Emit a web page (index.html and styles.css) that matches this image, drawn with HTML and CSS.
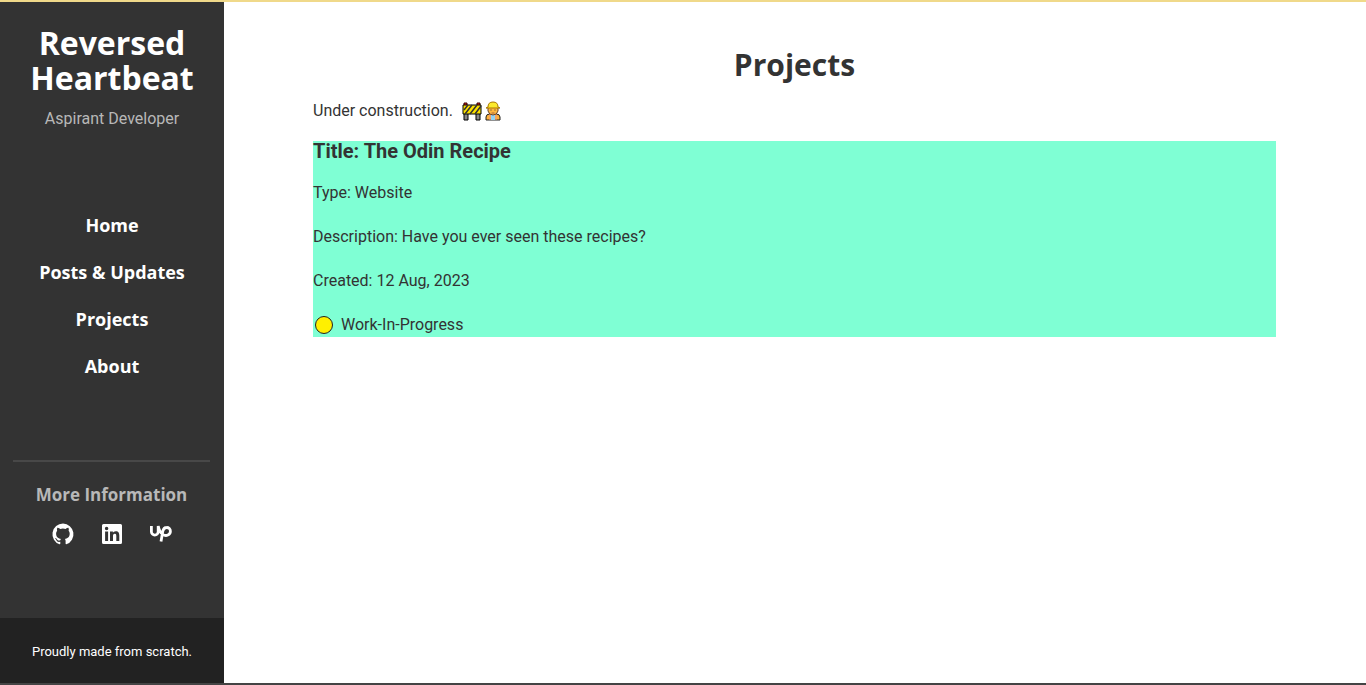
FILE: index.html
```html
<!DOCTYPE html>
<html lang="en">
<head>
<meta charset="utf-8">
<meta name="viewport" content="width=device-width, initial-scale=1">
<title>Projects | Reversed Heartbeat</title>
<link rel="stylesheet" href="styles.css">
</head>
<body>
<div class="layout">
  <aside class="sidebar">
    <header class="brand">
      <h1 class="brand-name">Reversed Heartbeat</h1>
      <p class="brand-role">Aspirant Developer</p>
    </header>
    <nav class="menu">
      <a href="#home">Home</a>
      <a href="#posts">Posts &amp; Updates</a>
      <a href="#projects">Projects</a>
      <a href="#about">About</a>
    </nav>
    <section class="more">
      <h2 class="more-title">More Information</h2>
      <div class="social">
        <a href="#github" aria-label="GitHub"><svg viewBox="0 0 24 24" width="24" height="24" fill="currentColor"><path d="M12 1.5a10.7 10.7 0 0 0-3.4 20.8c.6.1.7-.2.7-.5v-2c-3 .6-3.700-1.300-3.700-1.300-.5-1.200-1.200-1.600-1.200-1.600-1-.7.1-.6.1-.6 1.100.1 1.600 1.100 1.600 1.100 1 1.600 2.500 1.200 3.200.9.100-.7.400-1.200.7-1.400-2.400-.3-4.900-1.200-4.900-5.300 0-1.200.4-2.100 1.100-2.900-.1-.3-.5-1.400.1-2.800 0 0 .9-.3 2.900 1.100a10 10 0 0 1 5.400 0c2-1.400 2.900-1.100 2.900-1.100.6 1.400.2 2.500.1 2.800.7.800 1.100 1.700 1.100 2.900 0 4.100-2.500 5-4.900 5.300.4.300.8 1 .8 2v2.900c0 .3.200.6.7.5A10.700 10.700 0 0 0 12 1.500Z"/></svg></a>
        <a href="#linkedin" aria-label="LinkedIn"><svg viewBox="0 0 24 24" width="24" height="24" fill="currentColor" fill-rule="evenodd"><path d="M3.500 2h17a1.500 1.500 0 0 1 1.500 1.500v17a1.500 1.500 0 0 1-1.500 1.500h-17A1.500 1.500 0 0 1 2 20.500v-17A1.500 1.500 0 0 1 3.500 2Zm1.600 7.500V19h3V9.500Zm1.500-4.700a1.700 1.700 0 1 0 0 3.500 1.700 1.700 0 0 0 0-3.500ZM10 9.500V19h3v-4.700c0-1.300.3-2.500 1.800-2.500s1.500 1.400 1.500 2.500V19h3v-5.200c0-2.600-.6-4.500-3.600-4.500-1.400 0-2.400.8-2.800 1.500V9.500Z"/></svg></a>
        <a href="#upwork" aria-label="Upwork"><svg viewBox="0 0 24 24" width="24" height="24" fill="none" stroke="currentColor" stroke-width="2.800"><path d="M2.400 4v5.700a3.400 3.400 0 0 0 6.800 0V4c.7 3.500 2 6.500 4.400 8.300 3.700 2.600 7.800.4 7.800-3.100a3.600 3.600 0 0 0-3.700-3.700c-2.500 0-3.500 1.600-4 4L12 19.500"/></svg></a>
      </div>
    </section>
    <footer class="credit">Proudly made from scratch.</footer>
  </aside>
  <main class="content">
    <h2 class="page-title">Projects</h2>
    <p class="notice"><span>Under construction.</span>
      <span class="emojis"><svg viewBox="0 0 20 20" width="20" height="20" role="img" aria-label="Construction barrier"><path d="M3 12h3v7H2v-7zm12 0h3v7h-4v-7z" fill="#888" stroke="#000"/><path d="M2 4V2h3v2m10 0V2h3v2" fill="#e22" stroke="#300"/><path d="M1 4h18v9H1z" fill="#fce100" stroke="#000"/><path d="m2 9 4-5m-3 9 7-9m-2 9 7-9m-2 9 6-8" stroke="#333" stroke-width="1.500"/></svg><svg viewBox="0 0 20 20" width="20" height="20" role="img" aria-label="Construction worker"><path d="M3 19v-3q0-3 4-3h6q4 0 4 3v3z" fill="#ffb13b" stroke="#222"/><path d="M8 13h4v6H8z" fill="#92d3f5"/><path d="M7 13v6m6-6v6" stroke="#e98"/><path d="M5 6v4q1 4 5 4t5-4V6z" fill="#ffb83f" stroke="#643"/><path d="M3 7h14l-2-1q0-5-5-5T5 6z" fill="#fcea2b" stroke="#a70"/><path d="M7.500 9h1m3 0h1" stroke="#432"/><path d="M8.500 12h3" stroke="#a64"/></svg></span>
    </p>
    <article class="project">
      <h3 class="project-title">Title: The Odin Recipe</h3>
      <p>Type: Website</p>
      <p>Description: Have you ever seen these recipes?</p>
      <p>Created: 12 Aug, 2023</p>
      <p class="status"><svg viewBox="0 0 20 20" width="22" height="20" aria-hidden="true"><circle cx="10" cy="10" r="8.500" fill="#fff000" stroke="#222"/></svg>Work-In-Progress</p>
    </article>
  </main>
</div>
</body>
</html>
```
FILE: styles.css
```css
* {
  box-sizing: border-box;
}

body {
  margin: 0;
  min-height: 100vh;
  display: flex;
  border-top: 2px solid #f0d98a;
  border-bottom: 2px solid #444;
  font: 16px/20px Roboto, sans-serif;
  color: #333;
  background: #fff;
}

h1, h2, h3, p {
  margin: 0;
}

a {
  color: inherit;
  text-decoration: none;
}

.layout {
  flex: 1;
  display: grid;
  grid-template-columns: 224px 1fr;
}

.sidebar {
  display: flex;
  flex-direction: column;
  background: #333;
  color: #fff;
  text-align: center;
}

.brand {
  padding: 23px 16px 0;
}

.brand-name {
  font: 700 32px/35px "Open Sans", sans-serif;
}

.brand-role {
  margin-top: 14px;
  color: #b8b8b8;
}

.menu {
  display: flex;
  flex-direction: column;
  gap: 23px;
  margin-top: 84px;
  font: 700 18px/24px "Open Sans", sans-serif;
}

.more {
  margin: 82px 14px 0 13px;
  padding-top: 21px;
  border-top: 2px solid #484848;
}

.more-title {
  color: #b8b8b8;
  font: 700 17px/24px "Open Sans", sans-serif;
}

.social {
  display: flex;
  justify-content: center;
  gap: 25px;
  margin-top: 15px;
}

.social svg {
  display: block;
}

.credit {
  margin-top: auto;
  padding: 24px 8px 21px;
  background: #222;
  font-size: 13px;
}

.content {
  padding: 43px 90px 0 89px;
}

.page-title {
  font: 700 30px/40px "Open Sans", sans-serif;
  text-align: center;
}

.notice {
  display: flex;
  gap: 9px;
  margin: 16px 0 20px;
}

.emojis {
  display: flex;
  gap: 1px;
}

.project {
  display: flex;
  flex-direction: column;
  gap: 24px;
  padding-bottom: 2px;
  background: aquamarine;
}

.project-title {
  margin-bottom: -2px;
  font-size: 20px;
  line-height: 20px;
}

.status {
  display: flex;
  align-items: center;
  gap: 6px;
}
```
